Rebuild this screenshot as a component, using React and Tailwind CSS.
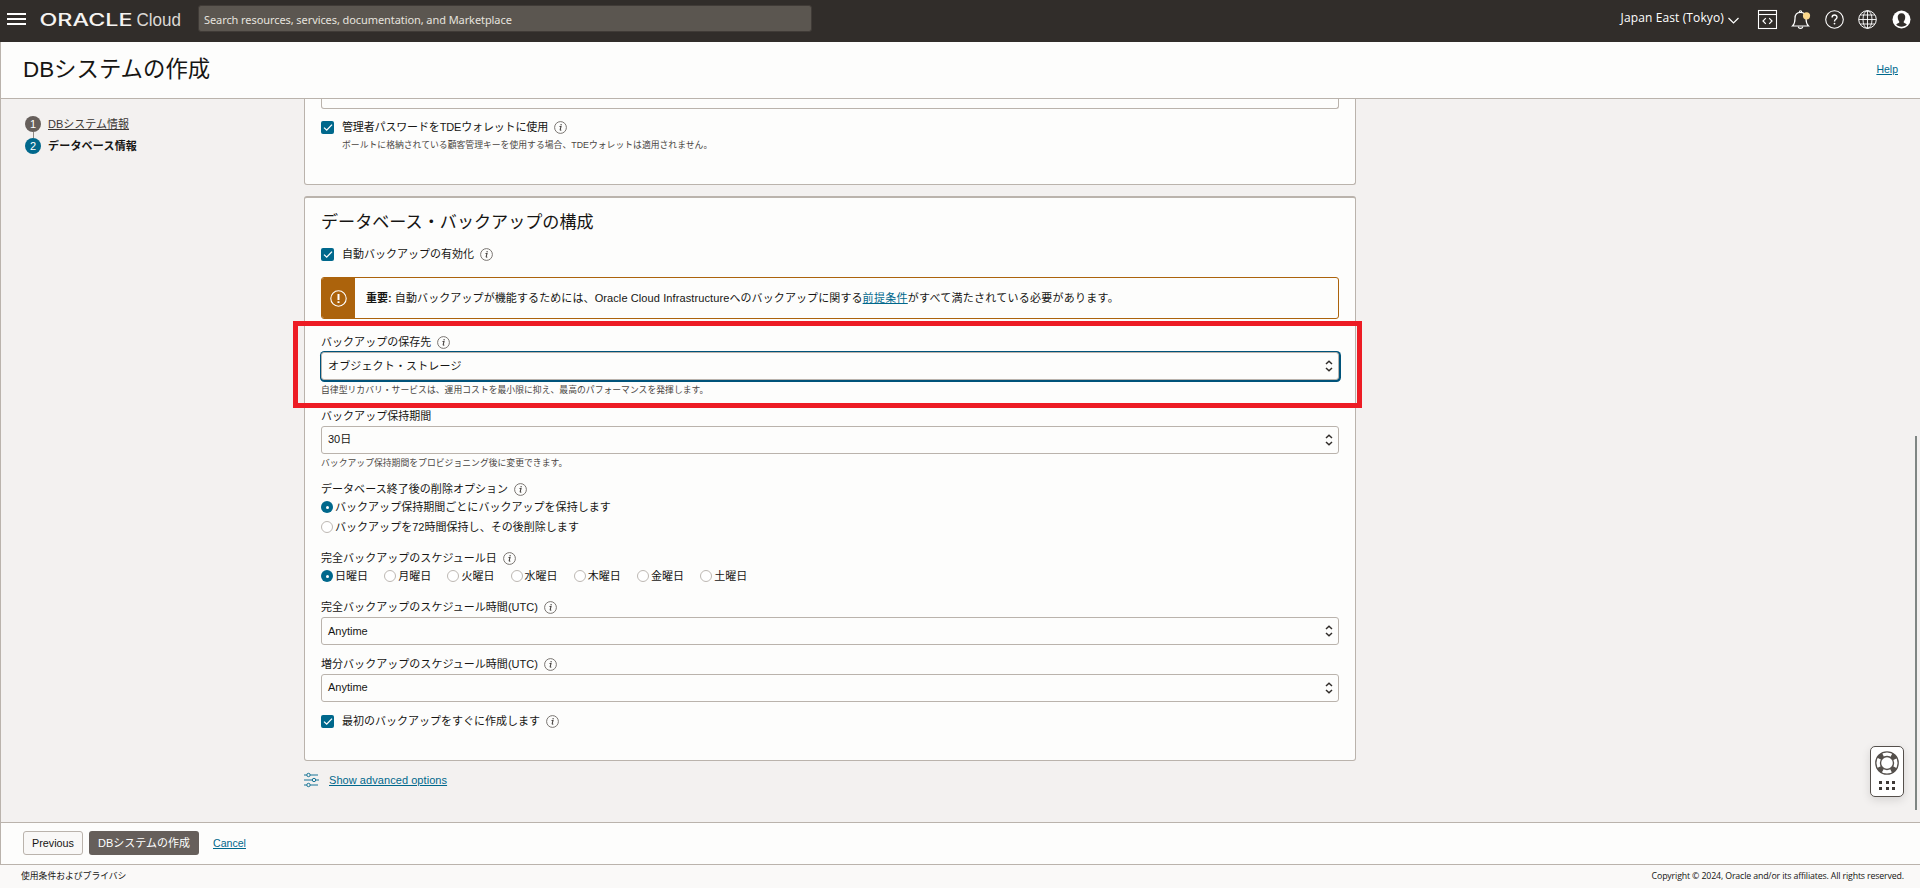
import { useState } from "react";
import clsx from "clsx";

const DAYS = ["日曜日", "月曜日", "火曜日", "水曜日", "木曜日", "金曜日", "土曜日"];

function InfoIcon() {
  return (
    <svg className="ml-1.5 h-[13px] w-[13px] shrink-0" viewBox="0 0 13 13" fill="none">
      <circle cx="6.5" cy="6.5" r="5.9" stroke="#6b6662" strokeWidth="0.9" />
      <path d="M5.5 5.5H7L6.2 8.6Q6.1 9.4 7.3 9" stroke="#4a4643" strokeWidth="1.1" />
      <circle cx="7.1" cy="3.7" r="0.7" fill="#4a4643" />
    </svg>
  );
}

function FieldLabel({ children, info = true, className }) {
  return (
    <div className={clsx("flex h-4 items-center text-[11px] leading-4", className)}>
      <span className="tracking-[0.04px]">{children}</span>
      {info && <InfoIcon />}
    </div>
  );
}

function Checkbox({ label, className, labelClass }) {
  const [checked, setChecked] = useState(true);

  return (
    <div className={clsx("flex h-3.5 items-center text-[11px] leading-[14px]", className)}>
      <button
        type="button"
        onClick={() => setChecked(!checked)}
        className="flex h-[13px] w-[13px] items-center justify-center rounded-[2px] bg-[#00688c]"
      >
        {checked && (
          <svg className="h-[9px] w-[10px]" viewBox="0 0 10 9" fill="none">
            <path d="M1 4.6L3.7 7.2L9 1.6" stroke="#fff" strokeWidth="1.3" />
          </svg>
        )}
      </button>
      <span className={clsx("ml-2", labelClass)}>{label}</span>
      <InfoIcon />
    </div>
  );
}

function Radio({ label, checked, onSelect, className }) {
  return (
    <button
      type="button"
      onClick={onSelect}
      className={clsx("flex h-4 items-center text-[11px] leading-4", className)}
    >
      <span
        className={clsx(
          "flex h-3 w-3 items-center justify-center rounded-full",
          checked ? "bg-[#00688c]" : "border border-[#bdb8b3] bg-white"
        )}
      >
        {checked && <span className="h-[3px] w-[3px] rounded-full bg-white" />}
      </span>
      <span className="ml-0.5 tracking-[0.03px]">{label}</span>
    </button>
  );
}

function SelectBox({ value, focused, className, valueClass = "pb-0.5" }) {
  return (
    <div
      className={clsx(
        "flex h-7 items-center justify-between rounded-[3px] border border-[#bab3ac] bg-[#fdfdfc] pr-[5px] pl-1.5 text-[11px] leading-4",
        focused && "shadow-[0.5px_0.5px_0_1.5px_#00537a]",
        className
      )}
    >
      <span className={valueClass}>{value}</span>
      <svg className="h-3 w-2" viewBox="0 0 8 12" fill="none">
        <path d="M1 4L4 1.3L7 4M1 8L4 10.7L7 8" stroke="#312d2a" strokeWidth="1.5" />
      </svg>
    </div>
  );
}

function HelpText({ children, className }) {
  return (
    <p className={clsx("h-3 text-[8.8px] leading-3 tracking-[0.03px] text-[#4a4643]", className)}>
      {children}
    </p>
  );
}

function TopBar() {
  return (
    <header className="flex h-[42px] shrink-0 items-start bg-[#312d2a] text-white">
      {/* Menu button */}
      <div className="mt-[13px] ml-[7px] flex w-[19px] flex-col gap-[3px]">
        <span className="h-0.5 bg-white" />
        <span className="h-0.5 bg-white" />
        <span className="h-0.5 bg-white" />
      </div>

      {/* Brand */}
      <svg className="ml-[12px] h-8 w-[150px]" viewBox="-2 0 150 32" fill="#f5f3f1">
        <text
          x="-0.5"
          y="25.5"
          fontFamily="Inter, sans-serif"
          fontSize="16.6"
          fontWeight="500"
          textLength="93"
          lengthAdjust="spacingAndGlyphs"
        >
          ORACLE
        </text>
        <text
          x="96.5"
          y="25.5"
          fontFamily="'Liberation Sans', sans-serif"
          fontSize="18"
          fill="#dcd9d5"
          textLength="44.5"
          lengthAdjust="spacingAndGlyphs"
        >
          Cloud
        </text>
      </svg>

      <div className="mt-[5px] ml-2.5 flex h-[27px] w-[614px] items-center rounded-[3px] border border-[#403b37] bg-[#5b5650] pt-[3px] pl-[5px] font-['Noto_Sans'] text-[11px] tracking-[-0.08px] text-[#e6e3df]">
        <span className="whitespace-nowrap">
          Search resources, services, documentation, and Marketplace
        </span>
      </div>

      <div className="mt-[9px] mr-2 ml-auto flex items-center">
        <span className="mb-1 text-[12px] leading-4 tracking-[0.12px] whitespace-nowrap font-['Open_Sans']">
          Japan East (Tokyo)
        </span>
        <svg className="mt-px ml-1 h-[7px] w-[11px]" viewBox="0 0 11 7" fill="none">
          <path d="M0.5 1L5.5 6L10.5 1" stroke="#fff" strokeWidth="1.2" />
        </svg>

        {/* Developer tools */}
        <svg className="ml-[18px] h-[21px] w-[21px]" viewBox="0 0 21 21" fill="none" stroke="#fff">
          <rect x="1.5" y="1.5" width="18" height="18" strokeWidth="1.1" />
          <path d="M1.5 5.5H19.5" strokeWidth="1.1" />
          <path d="M8.8 9.2L6 12L8.8 14.8M12.2 9.2L15 12L12.2 14.8" strokeWidth="1.2" />
        </svg>

        {/* Announcements */}
        <svg className="ml-3 h-[21px] w-[21px]" viewBox="0 0 21 21" fill="none" stroke="#fff">
          <path
            d="M2.5 17C4.5 15 5 12.5 5 9.5C5 5.5 7 3.4 10.5 3.4S16 5.5 16 9.5C16 12.5 16.5 15 18.5 17Z"
            strokeWidth="1.2"
          />
          <path d="M9.3 3.2C9.3 1.2 11.7 1.2 11.7 3.2M8.3 17.5C8.3 20 12.7 20 12.7 17.5" strokeWidth="1.1" />
          <circle cx="16.5" cy="6.8" r="3.6" fill="#fbd88c" stroke="none" />
        </svg>

        <svg className="ml-[13px] h-[21px] w-[21px]" viewBox="0 0 21 21" fill="none" stroke="#fff">
          <circle cx="10.5" cy="10.5" r="8.8" strokeWidth="1.1" />
          <path d="M8.1 8.4C8.1 5.3 13 5.3 13 8.3C13 10.2 10.5 10.3 10.5 12.4" strokeWidth="1.4" />
          <circle cx="10.5" cy="14.6" r="0.9" fill="#fff" stroke="none" />
        </svg>

        <svg className="ml-3 h-[21px] w-[21px]" viewBox="0 0 21 21" fill="none" stroke="#fff">
          <circle cx="10.5" cy="10.5" r="8.8" strokeWidth="1" />
          <ellipse cx="10.5" cy="10.5" rx="4.5" ry="8.8" strokeWidth="0.9" />
          <path d="M10.5 1.7V19.3M1.7 10.5H19.3M3.2 6H17.8M3.2 15H17.8" strokeWidth="0.9" />
        </svg>

        <svg className="ml-[13px] h-[21px] w-[21px]" viewBox="0 0 21 21">
          <circle cx="10.5" cy="10.5" r="9" fill="#fff" />
          <path
            d="M10.5 4.3C13.3 4.3 14.6 6.4 14.2 9C14 10.8 13.2 12.2 12.5 13C12.9 14.2 14.8 14.4 15.8 15.6C13.6 18.3 7.4 18.3 5.2 15.6C6.2 14.4 8.1 14.2 8.5 13C7.8 12.2 7 10.8 6.8 9C6.4 6.4 7.7 4.3 10.5 4.3Z"
            fill="#312d2a"
          />
        </svg>
      </div>
    </header>
  );
}

function Steps() {
  return (
    <nav className="w-[303px] shrink-0 pt-[17px] pl-6 text-[11px]">
      <div className="flex h-4 items-center">
        <span className="flex h-4 w-4 items-center justify-center rounded-full bg-[#665f5b] text-white">
          1
        </span>
        <span className="ml-[7px] leading-4 text-[#3c3835] underline">DBシステム情報</span>
      </div>
      <div className="ml-2 h-1.5 w-px bg-[#8f8984]" />
      <div className="flex h-4 items-center">
        <span className="flex h-4 w-4 items-center justify-center rounded-full bg-[#00688c] text-white">
          2
        </span>
        <span className="ml-[7px] leading-4 font-bold tracking-[0.2px]">データベース情報</span>
      </div>
    </nav>
  );
}

function BackupCard() {
  const [deleteOption, setDeleteOption] = useState(0);
  const [day, setDay] = useState(0);

  return (
    <section className="mt-[11px] h-[565px] rounded-[3px] border border-t-2 border-[#bab3ac] bg-[#fdfdfc] px-4 pt-3">
      <h2 className="h-6 pt-px text-[17.1px] leading-6">データベース・バックアップの構成</h2>
      <Checkbox className="mt-[13px]" label="自動バックアップの有効化" />

      {/* Prerequisite notice */}
      <div className="mt-4 flex h-[42px] overflow-hidden rounded-[3px] border border-[#ac630c]">
        <div className="flex w-[33px] items-center justify-center bg-[#ac630c]">
          <svg className="h-[17px] w-[17px]" viewBox="0 0 17 17" fill="none">
            <circle cx="8.5" cy="8.5" r="7.7" stroke="#fff" strokeWidth="1.1" />
            <path d="M8.5 4V10" stroke="#fff" strokeWidth="2" />
            <path d="M8.5 11.2V13" stroke="#fff" strokeWidth="2" />
          </svg>
        </div>
        <p className="ml-[11px] self-center text-[11px] leading-4 tracking-[0.1px]">
          <b className="tracking-normal">重要:</b> 自動バックアップが機能するためには、Oracle Cloud Infrastructureへのバックアップに関する
          <a className="tracking-[0.3px] text-[#00688c] underline">前提条件</a>
          <span className="tracking-[0.25px]">がすべて満たされている必要があります。</span>
        </p>
      </div>

      <FieldLabel className="mt-[15px]">バックアップの保存先</FieldLabel>
      <SelectBox
        className="mt-0.5"
        value="オブジェクト・ストレージ"
        valueClass="tracking-[0.15px]"
        focused
      />
      <HelpText className="mt-1">
        自律型リカバリ・サービスは、運用コストを最小限に抑え、最高のパフォーマンスを発揮します。
      </HelpText>

      <FieldLabel className="mt-3" info={false}>
        バックアップ保持期間
      </FieldLabel>
      <SelectBox className="mt-0.5" value="30日" />
      <HelpText className="mt-[3px]">バックアップ保持期間をプロビジョニング後に変更できます。</HelpText>

      <FieldLabel className="mt-3">データベース終了後の削除オプション</FieldLabel>
      <Radio
        className="mt-0.5"
        label="バックアップ保持期間ごとにバックアップを保持します"
        checked={deleteOption === 0}
        onSelect={() => setDeleteOption(0)}
      />
      <Radio
        className="mt-1"
        label="バックアップを72時間保持し、その後削除します"
        checked={deleteOption === 1}
        onSelect={() => setDeleteOption(1)}
      />

      <FieldLabel className="mt-[15px]">完全バックアップのスケジュール日</FieldLabel>
      <div className="mt-0.5 flex">
        {DAYS.map((name, i) => (
          <Radio
            key={name}
            className="w-[63.2px]"
            label={name}
            checked={day === i}
            onSelect={() => setDay(i)}
          />
        ))}
      </div>

      <FieldLabel className="mt-[15px]">完全バックアップのスケジュール時間(UTC)</FieldLabel>
      <SelectBox className="mt-0.5" value="Anytime" valueClass="pb-0" />

      <FieldLabel className="mt-[11px]">増分バックアップのスケジュール時間(UTC)</FieldLabel>
      <SelectBox className="mt-0.5" value="Anytime" />

      <Checkbox className="mt-3" label="最初のバックアップをすぐに作成します" />
    </section>
  );
}

function SupportWidget() {
  return (
    <div className="absolute top-[647px] right-4 flex h-[51px] w-[34px] flex-col items-center rounded-[5px] border border-[#55504c] bg-white pt-1 shadow-[0_3px_10px_rgba(0,0,0,0.12)]">
      <svg className="h-6 w-6 shrink-0" viewBox="0 0 24 24" fill="none" stroke="#55504c">
        <circle cx="12" cy="12" r="9" strokeWidth="5" strokeDasharray="5.4 8.737" strokeDashoffset="-4.37" />
        <circle cx="12" cy="12" r="11.2" strokeWidth="1.3" />
        <circle cx="12" cy="12" r="6.5" strokeWidth="1.4" />
      </svg>
      <div className="mt-1.5 grid grid-cols-3 gap-x-[3.5px] gap-y-[3px]">
        {[0, 1, 2, 3, 4, 5].map((i) => (
          <span key={i} className="h-[3px] w-[3px] bg-[#3f3a37]" />
        ))}
      </div>
    </div>
  );
}

export default function App() {
  return (
    <div className="flex h-[888px] w-[1920px] flex-col overflow-hidden bg-[#fdfdfc] font-['Liberation_Sans','Noto_Sans_CJK_JP',sans-serif] text-[#161513]">
      <TopBar />

      <div className="flex h-[823px] shrink-0 flex-col border-b border-l border-[#bab3ac]">
        <div className="flex h-[57px] shrink-0 items-center justify-between border-b border-[#bab3ac] pr-[22px] pl-[22px]">
          <h1 className="text-[22.4px] leading-8">DBシステムの作成</h1>
          <a className="text-[10.5px] text-[#00688c] underline">Help</a>
        </div>

        <main className="relative flex h-[723px] shrink-0 bg-[#f3f1f0]">
          <Steps />
          <div className="w-[1052px]">
            {/* Tail of the password card */}
            <section className="h-[86px] rounded-b-[3px] border border-t-0 border-[#bab3ac] bg-[#fdfdfc] px-4">
              <div className="h-2.5 rounded-b-[3px] border border-t-0 border-[#bab3ac]" />
              <Checkbox
                className="mt-[11px]"
                labelClass="tracking-[-0.15px]"
                label="管理者パスワードをTDEウォレットに使用"
              />
              <HelpText className="mt-[5px] ml-[21px]">
                ボールトに格納されている顧客管理キーを使用する場合、TDEウォレットは適用されません。
              </HelpText>
            </section>

            <BackupCard />

            <div className="mt-[11px] flex h-4 items-center">
              <svg className="h-4 w-[15px]" viewBox="0 0 15 16" fill="none" stroke="#00688c" strokeWidth="0.9">
                <path d="M0 3H2.8M6.2 3H14M0 8H8.3M11.7 8H15M0 13H2.8M6.2 13H14" />
                <circle cx="4.5" cy="3" r="1.7" />
                <circle cx="10" cy="8" r="1.7" />
                <circle cx="4.5" cy="13" r="1.7" />
              </svg>
              <a className="ml-2.5 text-[11px] tracking-[0.06px] text-[#00688c] underline">
                Show advanced options
              </a>
            </div>
          </div>

          {/* Highlight around the backup destination */}
          <div className="absolute top-[222px] left-[292px] h-[87px] w-[1069px] border-[5px] border-[#ed1c24]" />
          <SupportWidget />
          <div className="absolute top-[337px] right-[3px] h-[374px] w-0.5 bg-[#7f8683]" />
        </main>

        <div className="flex h-[41px] items-center border-t border-[#bab3ac] pl-[22px] text-[11px]">
          <button className="h-6 w-[60px] rounded-[3px] border border-[#bab3ac] bg-[#f9f8f7] text-[10.8px]">
            Previous
          </button>
          <button className="ml-1.5 h-6 w-[110px] rounded-[3px] bg-[#665f5b] text-white">DBシステムの作成</button>
          <a className="ml-3.5 pt-px text-[10.6px] text-[#00688c] underline">Cancel</a>
        </div>
      </div>

      <footer className="flex h-[23px] items-center justify-between bg-[#faf9f8] pr-4 pl-[21px] text-[8.8px]">
        <span>使用条件およびプライバシ</span>
        <span className="font-['Open_Sans'] tracking-[-0.15px]">
          Copyright © 2024, Oracle and/or its affiliates. All rights reserved.
        </span>
      </footer>
    </div>
  );
}
